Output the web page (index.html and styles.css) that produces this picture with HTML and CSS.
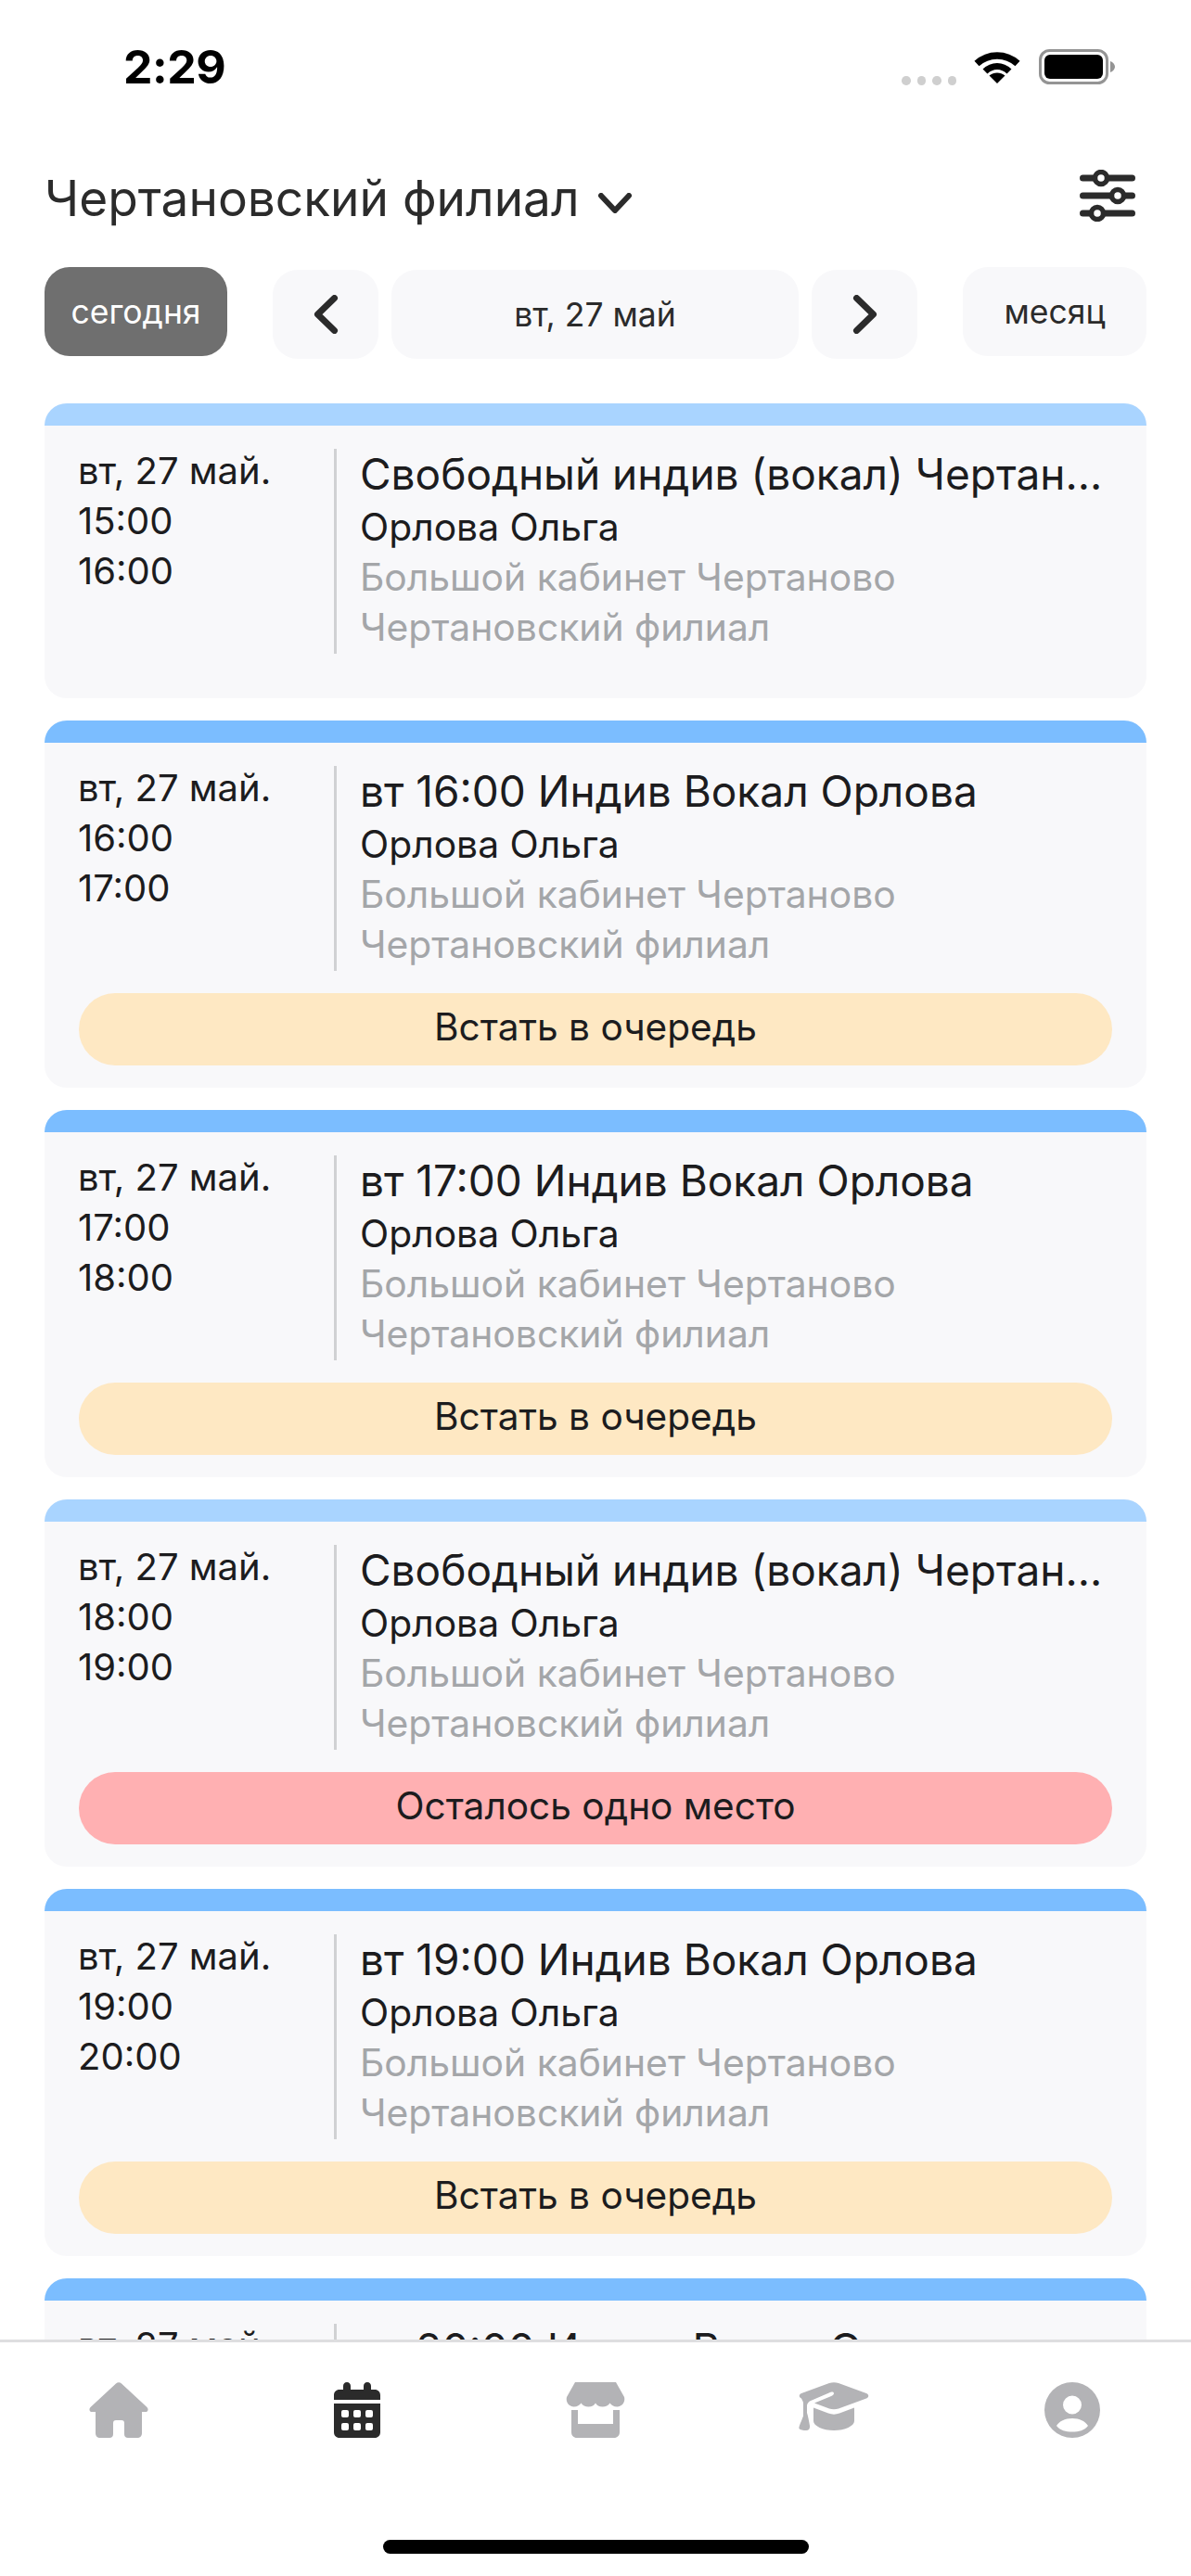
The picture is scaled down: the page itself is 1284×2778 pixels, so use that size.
FILE: index.html
```html
<!DOCTYPE html>
<html lang="ru">
<head>
<meta charset="utf-8">
<title>Расписание</title>
<link rel="stylesheet" href="styles.css">
</head>
<body>
<div class="app">
  <div class="status">
    <span class="clock">2:29</span>
    <div class="status-icons">
      <div class="dots"><i></i><i></i><i></i><i></i></div>
      <svg class="wifi" width="50" height="37" viewBox="0 0 50 37"><path d="M3 15.5C15.500 4 34.500 4 47 15.500" fill="none" stroke="#000" stroke-width="7.500"/><path d="M12 24C19.500 16.500 30.500 16.500 38 24" fill="none" stroke="#000" stroke-width="7"/><path d="M25 37L16.500 28.500C21.500 24.500 28.500 24.500 33.500 28.500Z"/></svg>
      <svg class="battery" width="82" height="38" viewBox="0 0 82 38"><rect x="1.500" y="1.500" width="72" height="35" rx="10" fill="none" stroke="#949494" stroke-width="3"/><rect x="6" y="6" width="63" height="26" rx="6"/><path d="M77 13C80 14 82 16.500 82 19S80 24 77 25Z" fill="#949494"/></svg>
    </div>
  </div>

  <header class="top">
    <div class="branch">
      <span class="branch-name">Чертановский филиал</span>
      <svg class="chev-down" width="36" height="22" viewBox="0 0 36 22"><path d="M3 3L18 19L33 3" fill="none" stroke="#2b2b2b" stroke-width="6" stroke-linecap="round" stroke-linejoin="round"/></svg>
    </div>
    <svg class="filter" width="60" height="56" viewBox="0 0 60 56">
      <g stroke="#2b2b2b" stroke-width="7" stroke-linecap="round"><path d="M3.500 9H56.500M3.500 28H56.500M3.500 47H56.500"/></g>
      <g fill="#fff" stroke="#2b2b2b" stroke-width="5.500"><circle cx="23" cy="9" r="6.500"/><circle cx="41" cy="28" r="6.500"/><circle cx="19" cy="47" r="6.500"/></g>
    </svg>
  </header>

  <div class="controls">
    <button class="pill pill-today">сегодня</button>
    <div class="pager">
      <button class="pill pill-arrow"><svg width="27" height="42" viewBox="0 0 27 42"><path d="M22.500 3.500L4.500 21L22.500 38.500" fill="none" stroke="#2b2b2b" stroke-width="7" stroke-linecap="round" stroke-linejoin="round"/></svg></button>
      <button class="pill pill-date">вт, 27 май</button>
      <button class="pill pill-arrow"><svg width="27" height="42" viewBox="0 0 27 42"><path d="M4.500 3.500L22.500 21L4.500 38.500" fill="none" stroke="#2b2b2b" stroke-width="7" stroke-linecap="round" stroke-linejoin="round"/></svg></button>
    </div>
    <button class="pill pill-month">месяц</button>
  </div>

  <main class="list">
    <article class="card card-free card-short">
      <div class="card-bar"></div>
      <div class="card-body">
        <div class="when"><div>вт, 27 май.</div><div>15:00</div><div>16:00</div></div>
        <div class="info">
          <div class="title">Свободный индив (вокал) Чертановский филиал</div>
          <div class="teacher">Орлова Ольга</div>
          <div class="place">Большой кабинет Чертаново</div>
          <div class="place">Чертановский филиал</div>
        </div>
      </div>
    </article>

    <article class="card">
      <div class="card-bar"></div>
      <div class="card-body">
        <div class="when"><div>вт, 27 май.</div><div>16:00</div><div>17:00</div></div>
        <div class="info">
          <div class="title">вт 16:00 Индив Вокал Орлова</div>
          <div class="teacher">Орлова Ольга</div>
          <div class="place">Большой кабинет Чертаново</div>
          <div class="place">Чертановский филиал</div>
        </div>
      </div>
      <button class="action action-queue">Встать в очередь</button>
    </article>

    <article class="card">
      <div class="card-bar"></div>
      <div class="card-body">
        <div class="when"><div>вт, 27 май.</div><div>17:00</div><div>18:00</div></div>
        <div class="info">
          <div class="title">вт 17:00 Индив Вокал Орлова</div>
          <div class="teacher">Орлова Ольга</div>
          <div class="place">Большой кабинет Чертаново</div>
          <div class="place">Чертановский филиал</div>
        </div>
      </div>
      <button class="action action-queue">Встать в очередь</button>
    </article>

    <article class="card card-free">
      <div class="card-bar"></div>
      <div class="card-body">
        <div class="when"><div>вт, 27 май.</div><div>18:00</div><div>19:00</div></div>
        <div class="info">
          <div class="title">Свободный индив (вокал) Чертановский филиал</div>
          <div class="teacher">Орлова Ольга</div>
          <div class="place">Большой кабинет Чертаново</div>
          <div class="place">Чертановский филиал</div>
        </div>
      </div>
      <button class="action action-last">Осталось одно место</button>
    </article>

    <article class="card">
      <div class="card-bar"></div>
      <div class="card-body">
        <div class="when"><div>вт, 27 май.</div><div>19:00</div><div>20:00</div></div>
        <div class="info">
          <div class="title">вт 19:00 Индив Вокал Орлова</div>
          <div class="teacher">Орлова Ольга</div>
          <div class="place">Большой кабинет Чертаново</div>
          <div class="place">Чертановский филиал</div>
        </div>
      </div>
      <button class="action action-queue">Встать в очередь</button>
    </article>

    <article class="card">
      <div class="card-bar"></div>
      <div class="card-body">
        <div class="when"><div>вт, 27 май.</div><div>20:00</div><div>21:00</div></div>
        <div class="info">
          <div class="title">вт 20:00 Индив Вокал Орлова</div>
          <div class="teacher">Орлова Ольга</div>
          <div class="place">Большой кабинет Чертаново</div>
          <div class="place">Чертановский филиал</div>
        </div>
      </div>
      <button class="action action-queue">Встать в очередь</button>
    </article>
  </main>

  <nav class="tabs">
    <div class="tab">
      <svg width="64" height="60" viewBox="0 0 64 60" fill="#b3b3b6"><path d="M29 1.500C30.800 -0.200 33.200 -0.200 35 1.500L62.500 27C64.500 29 63.500 32 61 32H57V55C57 58 55 60 52 60H42C39.500 60 38 58.500 38 56V44C38 42 37 41 35 41H29C27 41 26 42 26 44V56C26 58.500 24.500 60 22 60H12C9 60 7 58 7 55V32H3C0.500 32 -0.500 29 1.500 27Z"/></svg>
    </div>
    <div class="tab">
      <svg width="50" height="60" viewBox="0 0 50 60" fill="#2b2b2b"><path d="M14 0C16.500 0 18 2 18 4V8H32V4C32 2 33.500 0 36 0S40 2 40 4V8H44C47.500 8 50 10.500 50 14V19H0V14C0 10.500 2.500 8 6 8H10V4C10 2 11.500 0 14 0Z"/><path fill-rule="evenodd" d="M0 23H50V54C50 57.500 47.500 60 44 60H6C2.500 60 0 57.500 0 54ZM10 30A2 2 0 0 0 8 32V36A2 2 0 0 0 10 38H14A2 2 0 0 0 16 36V32A2 2 0 0 0 14 30ZM23 30A2 2 0 0 0 21 32V36A2 2 0 0 0 23 38H27A2 2 0 0 0 29 36V32A2 2 0 0 0 27 30ZM36 30A2 2 0 0 0 34 32V36A2 2 0 0 0 36 38H40A2 2 0 0 0 42 36V32A2 2 0 0 0 40 30ZM10 44A2 2 0 0 0 8 46V50A2 2 0 0 0 10 52H14A2 2 0 0 0 16 50V46A2 2 0 0 0 14 44ZM23 44A2 2 0 0 0 21 46V50A2 2 0 0 0 23 52H27A2 2 0 0 0 29 50V46A2 2 0 0 0 27 44ZM36 44A2 2 0 0 0 34 46V50A2 2 0 0 0 36 52H40A2 2 0 0 0 42 50V46A2 2 0 0 0 40 44Z"/></svg>
    </div>
    <div class="tab">
      <svg width="64" height="60" viewBox="0 0 64 60" fill="#b3b3b6"><path d="M10 0H54L63 16C64.500 22 60 26.500 55.500 26.500C51.500 26.500 49 24.500 47.500 22.500C46 25 43 26.500 39.500 26.500C36 26.500 33.500 25 32 22.500C30.500 25 28 26.500 24.500 26.500C21 26.500 18 25 16.500 22.500C15 24.500 12.500 26.500 8.500 26.500C4 26.500 -0.500 22 1 16Z"/><path d="M6 30H13V45H51V30H58V54C58 57.500 55.500 60 52 60H12C8.500 60 6 57.500 6 54Z"/></svg>
    </div>
    <div class="tab">
      <svg width="76" height="52" viewBox="0 0 76 52" fill="#b3b3b6"><path d="M33 1C36 0 40 0 43 1L73 12C76 13.200 76 16.300 73 17.500L43 28.500C40 29.500 36 29.500 33 28.500L17 22.600L34 15.500C36.500 14.500 38 13.500 38 12C38 10.500 36.500 10 34.500 10.800L13 20C10.800 21 9.500 22.500 9 25V33C10 36.500 11 41 12 47C12.400 50 11 52 8 52C5 52 1.500 51.500 0.500 50C0 48 3 42 5 36.500V23C5 20.500 4 19.800 3 17.500C0 16.300 0 13.200 3 12Z"/><path d="M16 27.500L32 33.500C36 35 40 35 44 33.500L60 27.500V42C60 47 50 52 38 52S16 47 16 42Z"/></svg>
    </div>
    <div class="tab">
      <svg width="60" height="60" viewBox="0 0 60 60"><path fill="#b3b3b6" fill-rule="evenodd" d="M30 0A30 30 0 1 1 30 60A30 30 0 1 1 30 0ZM30 14.500A10 10 0 1 0 30 34.500A10 10 0 1 0 30 14.500ZM30 39C22 39 16 42 13 47C17 52 23 53.500 30 53.500S43 52 47 47C44 42 38 39 30 39Z"/></svg>
    </div>
  </nav>
  <div class="home-zone"><div class="home-indicator"></div></div>
</div>
</body>
</html>
```

FILE: styles.css
```css
* { box-sizing: border-box; }
html, body { margin: 0; padding: 0; background: #fff; }
body { font-family: "Inter", "Roboto", "Noto Sans", sans-serif; color: #1c1c1e; }
.app { width: 1284px; height: 2778px; display: flex; flex-direction: column; overflow: hidden; background: #fff; }

.status { height: 144px; flex: none; display: flex; justify-content: space-between; padding: 44px 82px 0 133px; }
.clock { font-size: 50px; line-height: 56px; font-weight: 700; color: #000; letter-spacing: -0.5px; }
.status-icons { display: flex; align-items: flex-start; padding-top: 9px; }
.dots { display: flex; gap: 7px; margin-top: 29px; margin-right: 19px; }
.dots i { width: 9.500px; height: 9.500px; border-radius: 50%; background: #cfcfcf; display: block; }
.wifi { margin-right: 20px; display: block; }
.battery { display: block; }

.top { height: 60px; flex: none; margin-top: 40px; display: flex; justify-content: space-between; align-items: center; padding: 0 60px 0 48px; }
.branch { display: flex; align-items: center; gap: 20px; }
.branch-name { font-size: 53.200px; line-height: 60px; color: #2b2b2b; }
.chev-down { margin-top: 10px; display: block; }
.filter { display: block; margin-top: -6px; }

.controls { flex: none; margin-top: 44px; padding: 0 48px; display: flex; justify-content: space-between; align-items: flex-start; height: 100px; }
.pill { border: 0; font: inherit; background: #f8f8fa; color: #2b2b2b; padding: 0; font-size: 35.500px; display: flex; align-items: center; justify-content: center; }
.pill-today { width: 197px; height: 96px; border-radius: 27px; background: #6f6f6f; color: #fff; }
.pill-month { width: 198px; height: 96px; border-radius: 27px; }
.pager { display: flex; gap: 14px; margin-top: 3px; }
.pill-arrow { width: 114px; height: 96px; border-radius: 27px; }
.pill-date { width: 439px; height: 96px; border-radius: 27px; }

.list { flex: 1; min-height: 0; overflow: hidden; margin-top: 47px; padding: 0 48px; display: flex; flex-direction: column; gap: 24px; }
.card { flex: none; height: 396px; background: #f8f8fa; border-radius: 24px; overflow: hidden; }
.card-short { height: 318px; }
.card-bar { height: 24px; background: #7bbdff; }
.card-free .card-bar { background: #a9d4ff; }
.card-body { display: flex; margin-top: 25px; padding: 0 37px; height: 221px; }
.when { width: 275px; flex: none; font-size: 40px; line-height: 54px; margin-top: -3px; margin-left: -1px; margin-right: 1px; }
.info { flex: 1; min-width: 0; border-left: 3px solid #d0d1d3; padding-left: 25px; }
.title { font-size: 46px; line-height: 59px; margin-top: -2px; white-space: nowrap; overflow: hidden; text-overflow: ellipsis; }
.teacher { font-size: 40.800px; line-height: 54px; }
.place { font-size: 40.800px; line-height: 54px; color: #a4a6a9; }
.action { display: block; border: 0; width: 1114px; height: 78px; margin: 24px 37px 0; border-radius: 39px; font: inherit; font-size: 40.600px; color: #1c1c1e; padding: 0 0 6px; }
.action-queue { background: #fee8c3; }
.action-last { background: #ffb0b2; }

.tabs { flex: none; height: 132px; border-top: 3px solid #dedee0; background: #fff; display: flex; padding: 43px 0 0; position: relative; }
.tab { flex: 1; display: flex; justify-content: center; align-items: flex-start; }
.tab svg { display: block; }
.home-zone { flex: none; height: 123px; background: #fff; padding-top: 84px; display: flex; justify-content: center; }
.home-indicator { width: 459px; height: 15px; border-radius: 8px; background: #000; }
```
